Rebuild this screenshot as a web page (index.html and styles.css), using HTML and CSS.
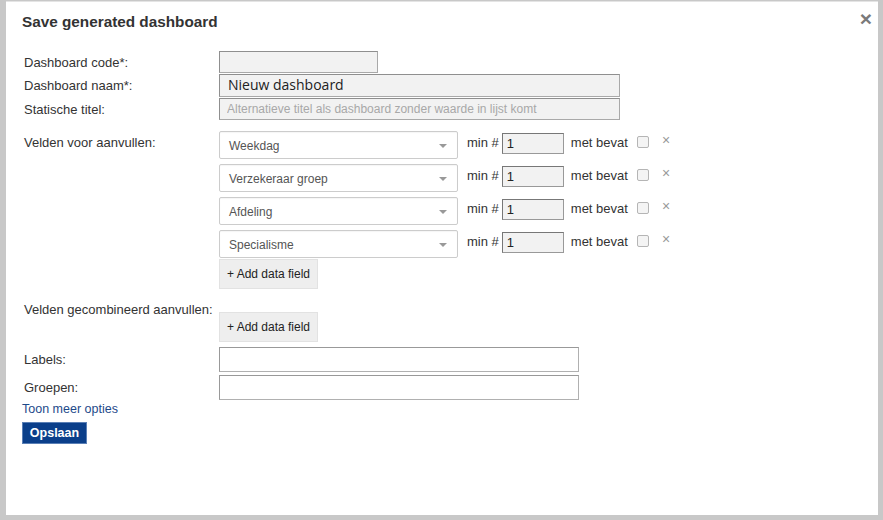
FILE: index.html
```html
<!DOCTYPE html>
<html>
<head>
<meta charset="utf-8">
<link rel="stylesheet" href="styles.css">
</head>
<body>
<div class="frame">
  <div class="dialog">
    <div class="header">
      <h1 class="title">Save generated dashboard</h1>
      <span class="close">×</span>
    </div>
    <div class="form">
      <div class="row r-code">
        <label class="lbl">Dashboard code*:</label>
        <div class="field"><input class="inp inp-code" type="text"></div>
      </div>
      <div class="row r-naam">
        <label class="lbl">Dashboard naam*:</label>
        <div class="field"><input class="inp inp-naam" type="text" value="Nieuw dashboard"></div>
      </div>
      <div class="row r-titel">
        <label class="lbl">Statische titel:</label>
        <div class="field"><input class="inp inp-titel" type="text" placeholder="Alternatieve titel als dashboard zonder waarde in lijst komt"></div>
      </div>
      <div class="row r-velden">
        <label class="lbl lbl-top">Velden voor aanvullen:</label>
        <div class="field fields-list">
          <div class="dfield">
            <div class="sel"><span>Weekdag</span><span class="arrow"></span></div>
            <span class="min">min #</span><input class="num" type="text" value="1">
            <span class="met">met bevat</span><span class="chk"></span><span class="rm">×</span>
          </div>
          <div class="dfield">
            <div class="sel"><span>Verzekeraar groep</span><span class="arrow"></span></div>
            <span class="min">min #</span><input class="num" type="text" value="1">
            <span class="met">met bevat</span><span class="chk"></span><span class="rm">×</span>
          </div>
          <div class="dfield">
            <div class="sel"><span>Afdeling</span><span class="arrow"></span></div>
            <span class="min">min #</span><input class="num" type="text" value="1">
            <span class="met">met bevat</span><span class="chk"></span><span class="rm">×</span>
          </div>
          <div class="dfield">
            <div class="sel"><span>Specialisme</span><span class="arrow"></span></div>
            <span class="min">min #</span><input class="num" type="text" value="1">
            <span class="met">met bevat</span><span class="chk"></span><span class="rm">×</span>
          </div>
          <button class="add">+ Add data field</button>
        </div>
      </div>
      <div class="row r-comb">
        <label class="lbl lbl-top">Velden gecombineerd aanvullen:</label>
        <div class="field"><button class="add add-comb">+ Add data field</button></div>
      </div>
      <div class="row r-labels">
        <label class="lbl">Labels:</label>
        <div class="field"><input class="inp inp-wide" type="text"></div>
      </div>
      <div class="row r-groepen">
        <label class="lbl">Groepen:</label>
        <div class="field"><input class="inp inp-wide" type="text"></div>
      </div>
      <a class="more" href="#">Toon meer opties</a>
      <button class="save">Opslaan</button>
    </div>
  </div>
</div>
</body>
</html>
```

FILE: styles.css
```css
* { box-sizing: border-box; }
html, body { margin: 0; padding: 0; }
body {
  width: 883px;
  height: 520px;
  background: #c8c8c8;
  font-family: "Liberation Sans", Arial, sans-serif;
  overflow: hidden;
}
.frame {
  padding: 1px 5px 5px 6px;
  height: 520px;
}
.dialog {
  background: #fff;
  height: 514px;
  padding: 0 0 0 16px;
  border-top: 1px solid #e4e4e4;
}
.header {
  display: flex;
  justify-content: space-between;
  align-items: center;
  height: 40px;
}
.title {
  margin: 0;
  font-size: 15.3px;
  font-weight: bold;
  color: #333;
}
.close {
  color: #7a7a7a;
  font-size: 21px;
  font-weight: bold;
  margin-right: 6px;
  margin-top: -6px;
}
.form {
  display: flex;
  flex-direction: column;
  padding-top: 9px;
}
.row {
  display: flex;
  align-items: center;
}
.lbl {
  width: 197px;
  padding-left: 2px;
  font-size: 13px;
  color: #333;
  flex: none;
}
.lbl-top { align-self: flex-start; }
.inp {
  display: block;
  border: 1px solid #a9a9a9;
  border-top-color: #8f8f8f;
  border-left-color: #8f8f8f;
  background: #f2f2f2;
  font-family: "Liberation Sans", Arial, sans-serif;
  padding: 0 8px;
  margin: 0;
  outline: none;
}
.inp-code { width: 159px; height: 22px; }
.r-naam { margin-top: 1px; }
.inp-naam {
  width: 401px;
  height: 23px;
  font-family: "Open Sans", "Segoe UI", sans-serif;
  font-size: 14px;
  color: #222;
  padding-bottom: 3px;
}
.r-titel { margin-top: 1px; }
.inp-titel {
  width: 401px;
  height: 22px;
  font-size: 12px;
  padding-left: 7px;
}
.inp-titel::placeholder { color: #a8a8a8; }
.r-velden { margin-top: 11px; }
.r-velden .lbl-top { padding-top: 4px; }
.fields-list {
  display: flex;
  flex-direction: column;
  gap: 5px;
}
.dfield {
  display: flex;
  align-items: flex-start;
  height: 28px;
  font-size: 13px;
  color: #333;
}
.sel {
  width: 239px;
  height: 28px;
  border: 1px solid #cccccc;
  border-radius: 2px;
  background: #fff;
  display: flex;
  align-items: center;
  justify-content: space-between;
  padding: 2px 10px 0 9px;
  font-size: 12px;
  color: #555;
  box-shadow: inset 0 1px 1px rgba(0,0,0,0.04);
}
.arrow {
  width: 0;
  height: 0;
  border-left: 4px solid transparent;
  border-right: 4px solid transparent;
  border-top: 4px solid #999;
}
.min { margin: 4px 0 0 9px; }
.num {
  width: 62px;
  height: 21px;
  margin: 2px 0 0 3px;
  border: 1px solid #999;
  border-top-color: #777;
  border-left-color: #777;
  background: #f2f2f2;
  font-family: "Liberation Sans", Arial, sans-serif;
  font-size: 13px;
  color: #222;
  padding: 0 4px;
  outline: none;
}
.met { margin: 4px 0 0 7px; }
.chk {
  width: 12px;
  height: 12px;
  border: 1px solid #b5b5b5;
  border-radius: 2px;
  background: #f4f4f4;
  margin: 5px 0 0 9px;
}
.rm {
  color: #999;
  font-size: 14px;
  margin: 1px 0 0 13px;
}
.add {
  align-self: flex-start;
  width: 99px;
  height: 30px;
  margin: 0;
  padding: 0;
  border: 1px solid #e2e2e2;
  background: #eeeeee;
  font-family: "Liberation Sans", Arial, sans-serif;
  font-size: 12px;
  color: #222;
  text-align: center;
}
.fields-list .add { margin-top: -4px; }
.r-comb { margin-top: 13px; }
.add-comb { margin-top: 10px; }
.r-labels { margin-top: 5px; }
.r-groepen { margin-top: 3px; }
.inp-wide {
  width: 360px;
  height: 25px;
  background: #fff;
  border: 1px solid #b0b0b0;
  border-top-color: #999;
  border-left-color: #999;
}
.more {
  margin-top: 2px;
  font-size: 12.5px;
  color: #1e4a8a;
  text-decoration: none;
  align-self: flex-start;
}
.save {
  align-self: flex-start;
  margin-top: 6px;
  width: 65px;
  height: 22px;
  padding: 0;
  border: 1px solid #5a7fb5;
  background: #0b3f8a;
  color: #fff;
  font-family: "Liberation Sans", Arial, sans-serif;
  font-weight: bold;
  font-size: 12.5px;
}
```
